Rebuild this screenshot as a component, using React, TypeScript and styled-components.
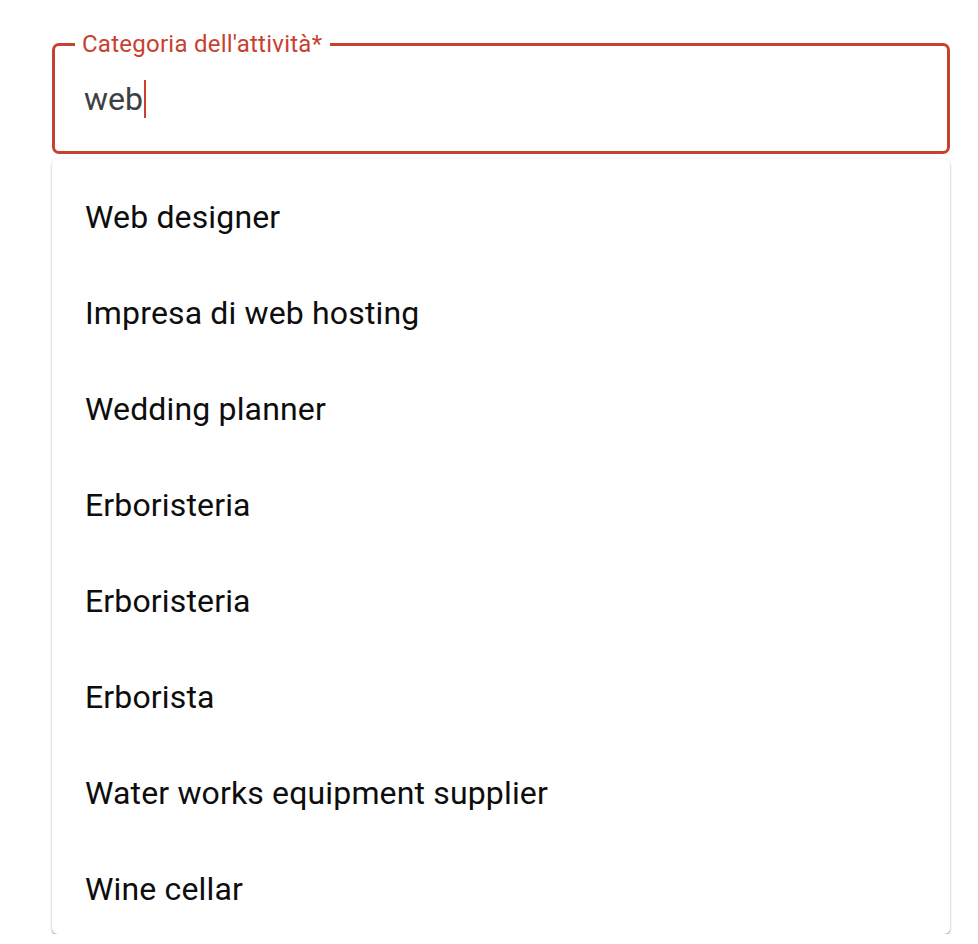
import styled, { createGlobalStyle } from 'styled-components';

const GlobalStyle = createGlobalStyle`
    body {
        margin: 0;
        background: #ffffff;
        font-family: Roboto, "Noto Sans", Arial, sans-serif;
    }
`;

const Page = styled.div`
    width: 898px;
    padding: 32px 0 0 52px;
`;

const Field = styled.fieldset`
    margin: 0;
    padding: 0 0 0 29px;
    height: 122px;
    border: 3px solid #c8412f;
    border-radius: 7px;
    display: flex;
    align-items: center;
    box-sizing: border-box;
`;

const Label = styled.legend`
    margin-left: -9px;
    padding: 0 8px 0 7px;
    font-size: 24px;
    line-height: 24px;
    letter-spacing: 0.25px;
    color: #c8412f;
`;

const Value = styled.div`
    display: flex;
    align-items: center;
    font-size: 32px;
    color: #3c4043;
    margin-top: -10px;
`;

const Caret = styled.span`
    display: inline-block;
    width: 2px;
    height: 38px;
    margin-left: 1px;
    background: #c8412f;
`;

const Menu = styled.ul`
    list-style: none;
    margin: 5px 0 0;
    padding: 10px 0 0;
    height: 775px;
    box-sizing: border-box;
    overflow: hidden;
    background: #ffffff;
    border-radius: 6px;
    box-shadow: 0 2px 2px rgba(0, 0, 0, 0.3), 0 0 3px rgba(0, 0, 0, 0.1);
`;

const Option = styled.li`
    height: 96px;
    display: flex;
    align-items: center;
    padding-left: 33px;
    font-size: 32px;
    letter-spacing: 0.15px;
    color: #0d0d0d;
`;

const options = [
    'Web designer',
    'Impresa di web hosting',
    'Wedding planner',
    'Erboristeria',
    'Erboristeria',
    'Erborista',
    'Water works equipment supplier',
    'Wine cellar',
];

const App = () => {
    return (
        <Page>
            <GlobalStyle />
            <Field>
                <Label>Categoria dell'attività*</Label>
                <Value>
                    web
                    <Caret />
                </Value>
            </Field>
            <Menu>
                {options.map((o, i) => (
                    <Option key={i}>{o}</Option>
                ))}
            </Menu>
        </Page>
    );
};

export default App;
